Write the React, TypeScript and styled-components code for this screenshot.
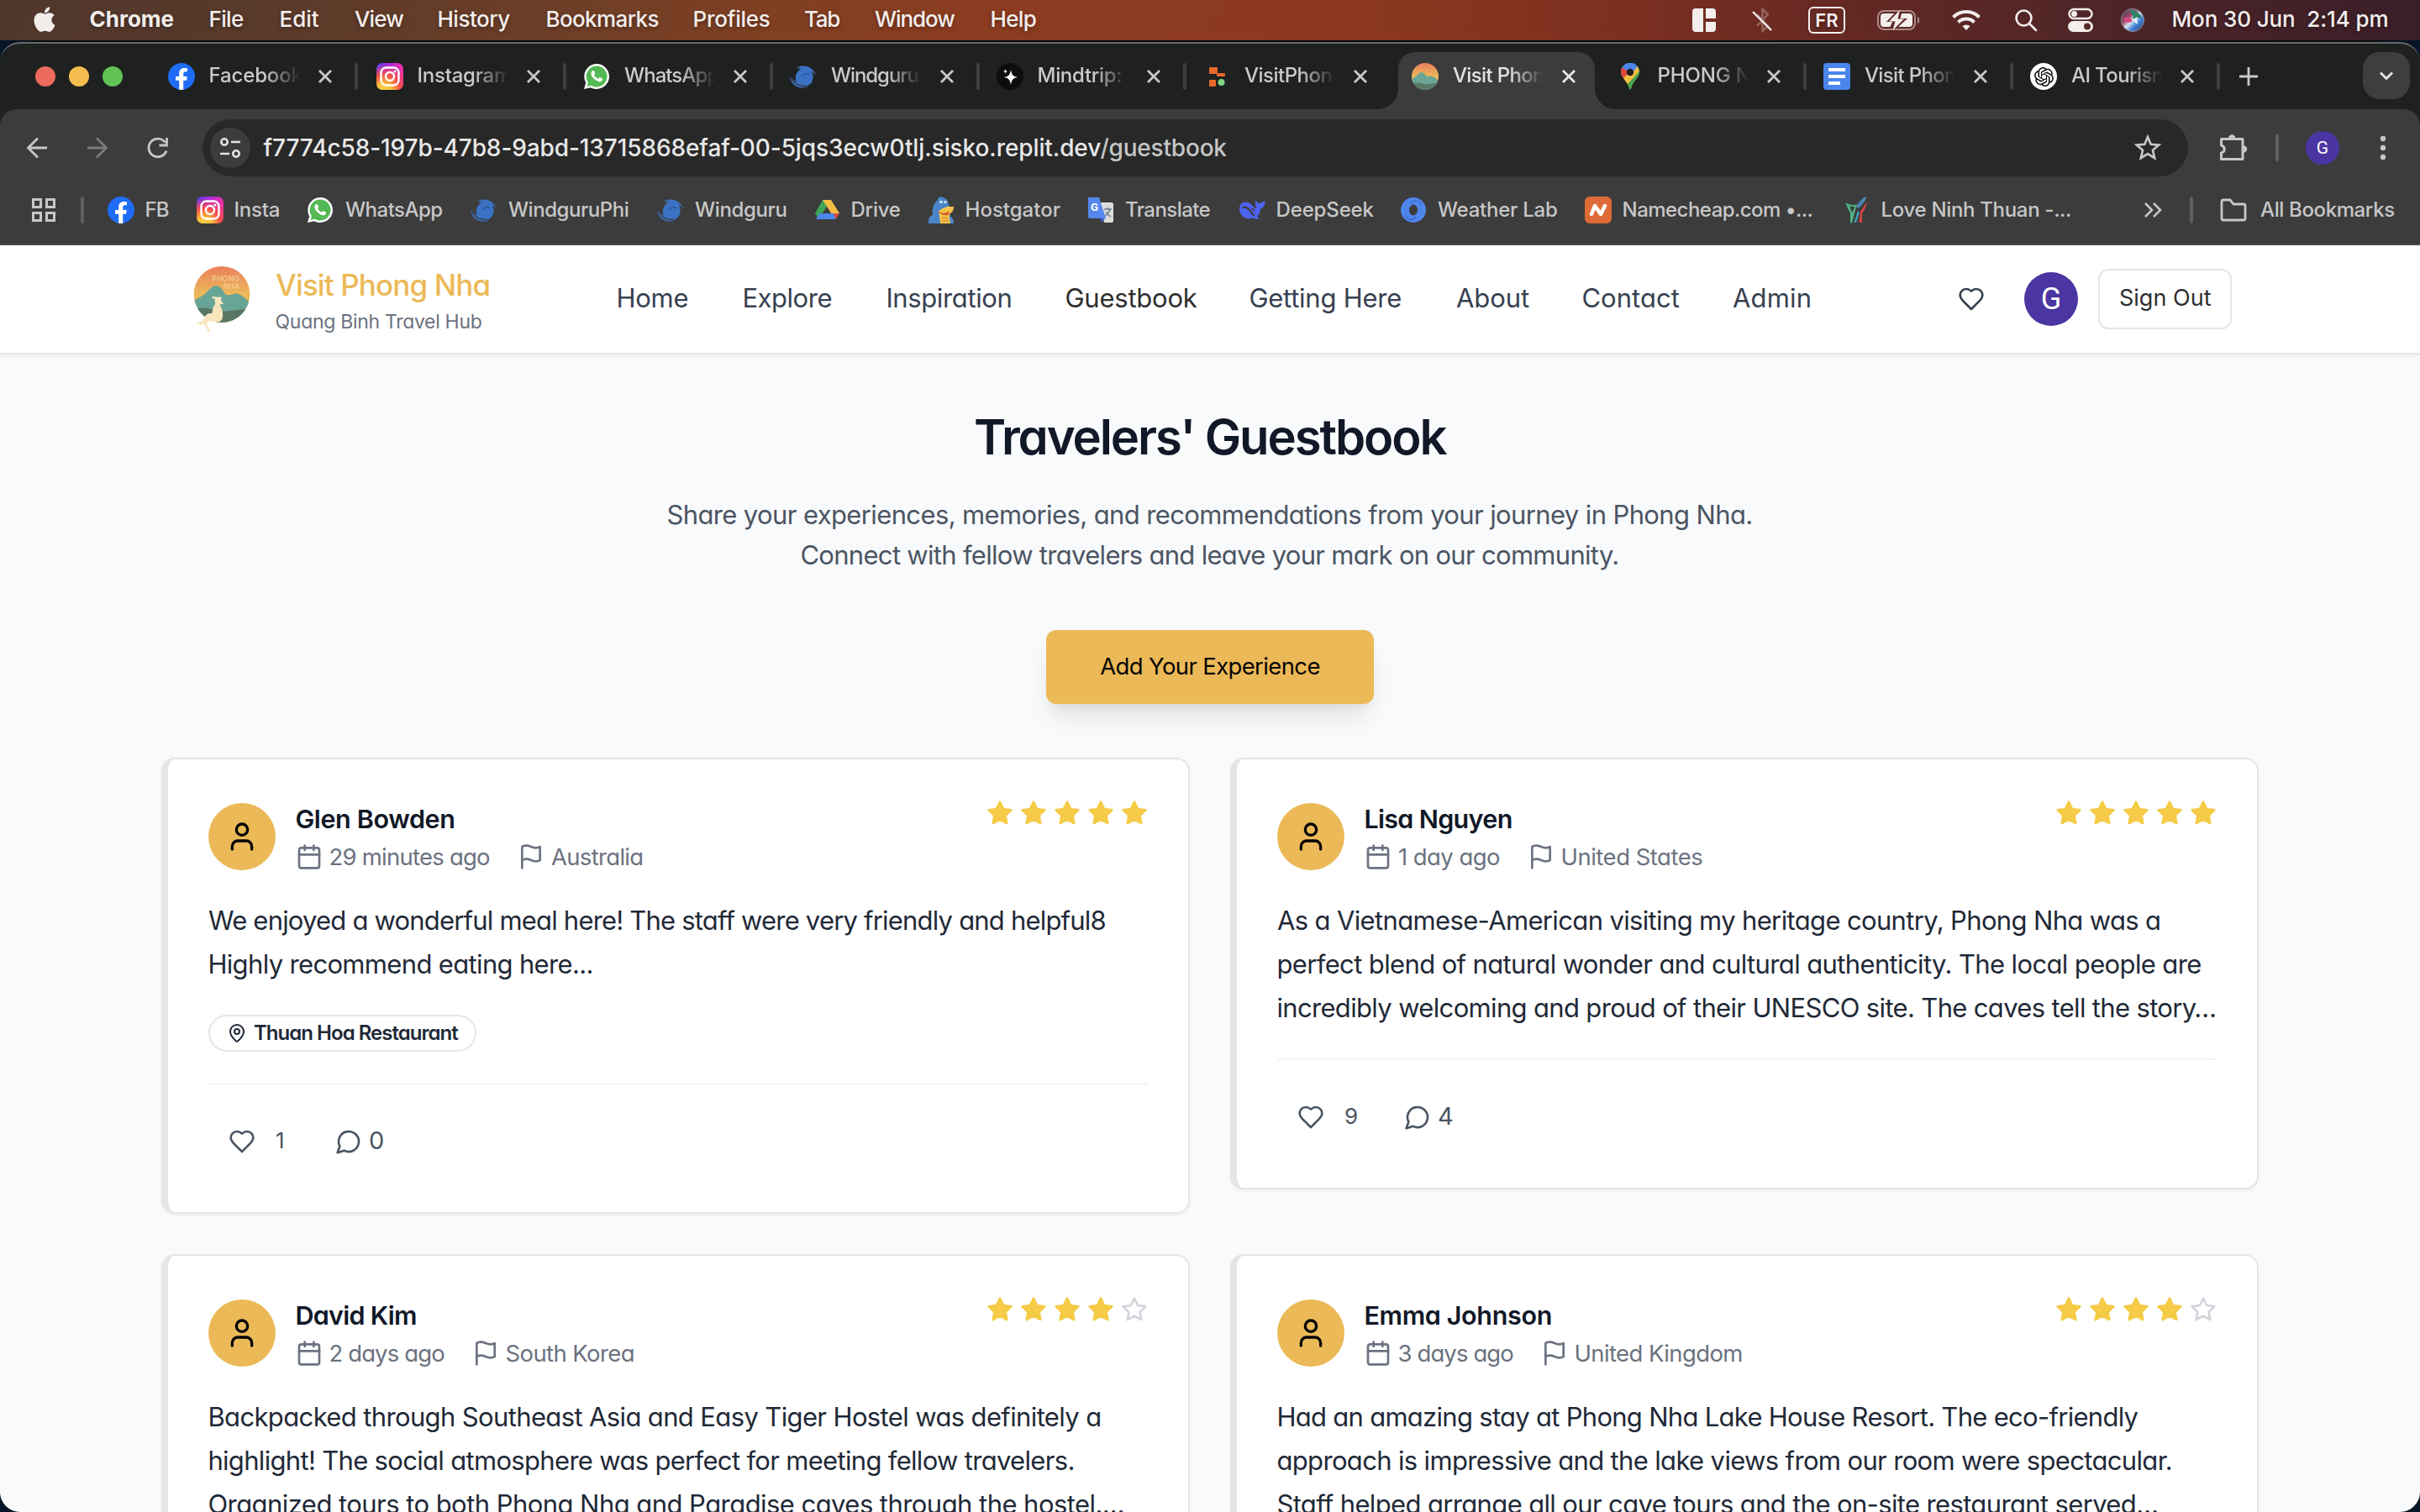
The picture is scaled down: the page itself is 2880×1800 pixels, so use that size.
import React, { useLayoutEffect, useRef, useState } from 'react';
import styled, { createGlobalStyle } from 'styled-components';
import { FaApple, FaFacebookF } from 'react-icons/fa';
import { SiOpenai } from 'react-icons/si';

const GlobalStyle = createGlobalStyle`
  * { box-sizing: border-box; }
  html, body { margin: 0; padding: 0; background: #060a10; }
  body {
    font-family: Inter, "Liberation Sans", sans-serif;
    -webkit-font-smoothing: antialiased;
    overflow: hidden;
  }
  svg { display: block; flex: none; }
`;

/* ---------- fitted text ---------- */

const FitBox = styled.span<{ $w: number }>`
  display: inline-block;
  flex: none;
  width: ${(p) => p.$w}px;
  white-space: pre;
`;

const FitInner = styled.span`
  display: inline-block;
`;

/* Tracks a single line of text so that its glyphs span the given width. */
function Fit({ w, children }: { w: number; children: string }) {
  const ref = useRef<HTMLSpanElement>(null);
  const [style, setStyle] = useState<React.CSSProperties>({});
  useLayoutEffect(() => {
    const el = ref.current;
    if (!el) return;
    const size = parseFloat(getComputedStyle(el).fontSize);
    const lead = /^[AVWTY1]/.test(children) ? 0 : 0.02;
    const natural = el.offsetWidth - (lead + 0.02) * size;
    const gaps = Math.max(children.length - 1, 1);
    setStyle({
      letterSpacing: children.length > 1 ? `${(w - natural) / gaps}px` : undefined,
      marginLeft: `${-lead * size}px`,
    });
  }, [w, children]);
  return (
    <FitBox $w={w}>
      <FitInner ref={ref} style={style}>{children}</FitInner>
    </FitBox>
  );
}

/* ---------- desktop and menu bar ---------- */

const Desktop = styled.div`
  width: 2880px;
  height: 1800px;
  display: flex;
  flex-direction: column;
  gap: 2px;
  overflow: hidden;
  background: linear-gradient(90deg, #07182b 0, #060a10 60px, #060a10 2820px, #07182b 100%);
`;

const MenuBar = styled.div`
  height: 48px;
  flex: none;
  display: flex;
  align-items: center;
  padding-left: 36px;
  color: #f3eeec;
  font-size: 26px;
  line-height: 46px;
  text-shadow: 0 2px 4px rgba(0, 0, 0, 0.35);
  background: linear-gradient(90deg, #50372c 0, #59392a 300px, #6c3e27 650px, #7f3f22 920px, #8b3c20 1150px, #8c381f 1600px, #7d3020 1920px, #642823 2200px, #4e2528 2500px, #3a1e28 2880px);
`;

const MenuSlot = styled.div<{ $w: number; $bold?: boolean }>`
  width: ${(p) => p.$w}px;
  flex: none;
  display: flex;
  align-items: center;
  padding-bottom: 2px;
  font-weight: ${(p) => (p.$bold ? 700 : 500)};
`;

const Status = styled.div<{ $w: number; $gap: number }>`
  width: ${(p) => p.$w}px;
  margin-left: ${(p) => p.$gap}px;
  flex: none;
  display: flex;
  align-items: center;
  justify-content: center;
`;

const LangBadge = styled.div`
  width: 44px;
  height: 32px;
  border: 2px solid #f3eeec;
  border-radius: 6px;
  display: flex;
  align-items: center;
  justify-content: center;
  font-size: 22px;
  font-weight: 600;
  line-height: 28px;
`;

const Clock = styled.div`
  margin-left: 33px;
  padding-bottom: 2px;
  font-weight: 500;
`;

/* ---------- browser window ---------- */

const Window = styled.div`
  flex: 1;
  min-height: 0;
  display: flex;
  flex-direction: column;
  border-top: 2px solid #676a69;
  border-radius: 24px;
  overflow: hidden;
  background: #1f2120;
`;

const TabStrip = styled.div`
  height: 78px;
  flex: none;
  display: flex;
  align-items: stretch;
  padding-right: 12px;
`;

const Lights = styled.div`
  width: 184px;
  padding-left: 42px;
  display: flex;
  align-items: center;
  gap: 16px;
`;

const Light = styled.i<{ $c: string }>`
  width: 24px;
  height: 24px;
  border-radius: 50%;
  background: ${(p) => p.$c};
`;

const TabCell = styled.div<{ $w: number }>`
  width: ${(p) => p.$w}px;
  flex: none;
  display: flex;
  align-items: center;
  padding-left: 16px;
  color: #c9cac9;
`;

const ActiveTab = styled.div`
  position: relative;
  width: 234px;
  margin: 10px 10px 0 2px;
  padding: 0 0 10px 16px;
  flex: none;
  display: flex;
  align-items: center;
  border-radius: 20px 20px 0 0;
  background: #3c3c3c;
  color: #e3e3e3;
  &::before, &::after {
    content: "";
    position: absolute;
    bottom: 0;
    width: 24px;
    height: 24px;
  }
  &::before {
    left: -24px;
    background: radial-gradient(circle at 0 0, transparent 23.5px, #3c3c3c 24px);
  }
  &::after {
    right: -24px;
    background: radial-gradient(circle at 100% 0, transparent 23.5px, #3c3c3c 24px);
  }
`;

const TabTitle = styled.div`
  width: 108px;
  margin-left: 17px;
  overflow: hidden;
  font-size: 24px;
  font-weight: 450;
  line-height: 36px;
  padding-bottom: 2px;
  mask-image: linear-gradient(90deg, #000 62%, transparent 100%);
`;

const TabClose = styled.div`
  width: 24px;
  margin-left: 18px;
  display: flex;
  justify-content: center;
`;

const TabRule = styled.i<{ $hidden?: boolean }>`
  width: 4px;
  height: 32px;
  border-radius: 2px;
  margin-left: 23px;
  background: ${(p) => (p.$hidden ? 'transparent' : '#3c3f3e')};
`;

const NewTab = styled.div`
  flex: 1;
  display: flex;
  align-items: center;
  padding-left: 19px;
`;

const TabMenu = styled.div`
  width: 56px;
  height: 56px;
  margin-top: 10px;
  border-radius: 20px;
  background: #3c3f3e;
  display: flex;
  align-items: center;
  justify-content: center;
`;

const Toolbar = styled.div`
  height: 162px;
  flex: none;
  display: flex;
  flex-direction: column;
  border-radius: 20px 20px 0 0;
  border-bottom: 2px solid #484848;
  background: #3c3c3c;
  color: #c7c7c7;
`;

const AddressRow = styled.div`
  height: 80px;
  padding-top: 12px;
  display: flex;
  align-items: center;
`;

const NavButtons = styled.div`
  width: 241px;
  display: flex;
  align-items: center;
  padding-left: 28px;
  gap: 40px;
`;

const UrlPill = styled.div`
  width: 2363px;
  height: 68px;
  border-radius: 34px;
  background: #282828;
  display: flex;
  align-items: center;
  padding: 0 28px 0 9px;
  font-size: 28px;
  font-weight: 450;
  line-height: 40px;
`;

const SiteButton = styled.div`
  width: 48px;
  height: 48px;
  border-radius: 50%;
  margin-right: 16px;
  background: #3c3c3c;
  display: flex;
  align-items: center;
  justify-content: center;
`;

const Domain = styled.div`color: #e8e8e8;`;
const Path = styled.div`flex: 1; color: #c4c7c5;`;

const ToolbarEnd = styled.div`
  flex: 1;
  display: flex;
  align-items: center;
  padding-left: 36px;
`;

const Rule = styled.i<{ $gap: number }>`
  width: 4px;
  height: 32px;
  border-radius: 2px;
  margin-left: ${(p) => p.$gap}px;
  background: #5f5f5f;
`;

const Avatar = styled.div<{ $size: number; $font: number }>`
  width: ${(p) => p.$size}px;
  height: ${(p) => p.$size}px;
  flex: none;
  border-radius: 50%;
  background: #4a35a2;
  color: #fff;
  font-family: Roboto, sans-serif;
  font-size: ${(p) => p.$font}px;
  display: flex;
  align-items: center;
  justify-content: center;
`;

const BookmarkRow = styled.div`
  height: 80px;
  display: flex;
  align-items: center;
  font-size: 24px;
  font-weight: 450;
  line-height: 36px;
`;

const AppsCell = styled.div`
  width: 128px;
  display: flex;
  align-items: center;
  padding-left: 38px;
`;

const Bookmark = styled.div<{ $w: number }>`
  width: ${(p) => p.$w}px;
  flex: none;
  display: flex;
  align-items: center;
`;

const BookmarkText = styled.div<{ $gap: number }>`
  margin-left: ${(p) => p.$gap}px;
`;

/* ---------- favicons ---------- */

const Disc = styled.div<{ $bg: string; $fg: string }>`
  width: 32px;
  height: 32px;
  flex: none;
  border-radius: 50%;
  background: ${(p) => p.$bg};
  color: ${(p) => p.$fg};
  display: flex;
  align-items: center;
  justify-content: center;
  overflow: hidden;
`;

const FbDisc = styled(Disc)`
  align-items: flex-end;
`;

const InstaTile = styled.div`
  width: 32px;
  height: 32px;
  flex: none;
  border-radius: 7px;
  background: radial-gradient(circle at 28% 105%, #ffd54a 0, #fdc13c 22%, #f5504a 48%, transparent 78%),
    linear-gradient(115deg, #4a3cf0 0, #b02be0 35%, #ea2fa8 70%);
`;

const Icon = ({ size = 32, box = 32, children }: { size?: number; box?: number; children: React.ReactNode }) => (
  <svg width={size} height={size} viewBox={`0 0 ${box} ${box}`} fill="none">{children}</svg>
);

const Facebook = () => <FbDisc $bg="#1f6cf6" $fg="#fff"><FaFacebookF size={26} /></FbDisc>;

const Instagram = () => (
  <InstaTile>
    <Icon>
      <rect x="5.5" y="5.5" width="21" height="21" rx="6" stroke="#fff" strokeWidth="2.4" />
      <circle cx="16" cy="16" r="5" stroke="#fff" strokeWidth="2.4" />
      <circle cx="22" cy="10" r="1.5" fill="#fff" />
    </Icon>
  </InstaTile>
);

const WhatsApp = () => (
  <Icon>
    <path d="M16 1a15 15 0 0 1 0 30c-2.600 0-5-.7-7.100-1.800L1 31l2.200-7.600A15 15 0 0 1 16 1z" fill="#fff" />
    <path d="M16 3.500a12.500 12.500 0 1 1-6.300 23.300L4.600 28l1.300-4.900A12.500 12.500 0 0 1 16 3.500z" fill="#54b955" />
    <path d="M11.500 9c.6-.2 1.300-.1 1.600.6l1.100 2.600c.2.500-.9 1.600-1.100 2 1 2.100 2.600 3.600 4.800 4.500.5-.3 1.400-1.800 1.900-1.700l2.900 1.400c.6.400.2 1.700-.1 2.300-.6 1-2.200 1.700-3.300 1.600-4.300-.6-9.300-5.300-9.900-9.200-.1-1.500.6-3.400 2.100-4.100z" fill="#fff" />
  </Icon>
);

const Windguru = () => (
  <Icon>
    <path d="M9 7c8-4.500 18-2 22 8-1.500-2-3-3.300-5-4 1.500 2.500 2 5.500 1.300 8.500C26 25.500 21 28.500 15.500 28 8.500 27.500 2.500 23 1 16.500c2 3 4.500 5 7 6C5.500 17 7 10.500 13 7.700 11.500 7.200 10.500 7 9 7z" fill="#3b72c4" />
    <path d="M12 5c7-2 14 1 17 8M2 19c3 6 10 9 17 8" stroke="#3c3c3c" strokeWidth="1.200" />
    <path d="M8 5.500C15 1.500 27 3.500 31 14 26 7 17 4.500 8 5.500zM0 17c3 7 11 13 22 11.500C13 32 2 28 0 17z" fill="#3b72c4" />
    <path d="M14 16c2-3.500 6-4 9-2.500" stroke="#2b559b" strokeWidth="1.400" />
  </Icon>
);

const Mindtrip = () => (
  <Disc $bg="#0d0d0d" $fg="#fff">
    <Icon>
      <path d="M17 8c1 6 2.500 8 8 9-5.500 1-7 3-8 9-1-6-2.500-8-8-9 5.500-1 7-3 8-9z" fill="#fff" />
      <path d="M10.500 7c.3 2 1 2.700 3 3-2 .3-2.700 1-3 3-.3-2-1-2.700-3-3 2-.3 2.700-1 3-3z" fill="#fff" />
    </Icon>
  </Disc>
);

const Replit = () => (
  <Icon>
    <rect x="7" y="5" width="10" height="8" rx="1" fill="#e7692c" />
    <rect x="16" y="12" width="10" height="4" rx="1" fill="#e7692c" />
    <rect x="7" y="20" width="8" height="8" rx="1" fill="#e7692c" />
    <circle cx="21.500" cy="23" r="4" fill="#7fd67f" />
  </Icon>
);

const PhongNha = () => (
  <Icon>
    <defs>
      <linearGradient id="favSky" x1="0" y1="0" x2="0" y2="1">
        <stop offset="0" stopColor="#ea7f5c" /><stop offset=".5" stopColor="#ecb85a" />
      </linearGradient>
      <clipPath id="favClip"><circle cx="16" cy="16" r="16" /></clipPath>
    </defs>
    <g clipPath="url(#favClip)">
      <rect width="32" height="32" fill="url(#favSky)" />
      <path d="M0 19C5 17 9 11 12 11c3 0 5 6 8 5 4-2 8 2 12 5v11H0z" fill="#69a597" />
      <path d="M0 25c8-4 14 1 20 0 5-1 8-1 12 0v7H0z" fill="#5a7965" />
    </g>
  </Icon>
);

const MapsPin = () => (
  <Icon>
    <defs>
      <clipPath id="pinClip"><path d="M16 0c6.200 0 11 4.800 11 10.800 0 7.200-7.500 9.700-10 19.700-.3 1.500-1.700 1.500-2 0C12.500 20.500 5 18 5 10.800 5 4.800 9.800 0 16 0z" /></clipPath>
    </defs>
    <g clipPath="url(#pinClip)">
      <rect width="32" height="32" fill="#4fa352" />
      <path d="M16 11 24 0H0v6z" fill="#4a86ec" />
      <path d="M4 4l12 7-9 10H0z" fill="#de4b3e" />
      <path d="M6 20 20 6l5-6 6 6-19 20z" fill="#f3bd42" />
      <path d="M32 4 11 28l8 4h13z" fill="#4fa352" />
      <path d="M9 0h12l4 4-6 7-11-6z" fill="#4a86ec" />
    </g>
    <circle cx="16" cy="11" r="4.200" fill="#1f2120" />
  </Icon>
);

const Docs = () => (
  <Icon>
    <rect width="32" height="32" rx="4" fill="#4a86ec" />
    <path d="M6 8h20M6 16h20M6 24h14" stroke="#fff" strokeWidth="4" />
  </Icon>
);

const OpenAi = () => <Disc $bg="#fff" $fg="#0c0c0c"><SiOpenai size={23} /></Disc>;

const Drive = () => (
  <Icon>
    <path d="M11 4h10L6.500 27 2 20z" fill="#3fa457" />
    <path d="M11 4h10l10 16H21z" fill="#f5bd42" />
    <path d="M7.500 20H31l-5 7H3z" fill="#4a86ec" />
    <path d="M24 20h7l-4.500 7z" fill="#dd4b3e" />
    <path d="M16 12l5 8H11z" fill="#3c3c3c" />
  </Icon>
);

const Hostgator = () => (
  <Icon>
    <path d="M12 4c.500-3 2-4.500 4-3.500 2 0 3 0 4 1.500 3 1 4.500 3 4.500 6l1.500 4 4 .5c1 3-1 6-4 7l1 4c2.500 1 4 4 4 8.500H1c-.5-5 1-9 5-10C5 15 7 8 12 4z" fill="#4a86c9" />
    <path d="M18 14l5-2h8c0 4-1.500 7-4.500 8l-1 4 1.500 8H15l-1-9-1-6z" fill="#f5c44a" />
    <path d="M12 16c3 4 8 5.500 14 1l-1.500 5C19 23 14 21 12 16z" fill="#d9562f" />
    <circle cx="16" cy="6.500" r="1.800" fill="#dfe9f3" /><circle cx="21" cy="6.500" r="1.600" fill="#dfe9f3" />
    <path d="M17 25l7 1M17 29l8 0" stroke="#e08a36" strokeWidth="1.400" />
  </Icon>
);

const Translate = () => (
  <Icon>
    <path d="M14 7h15c1 0 2 1 2 2v20c0 1-1 2-2 2H20z" fill="#dcdcdc" />
    <path d="M15 26h6l-4 5z" fill="#3457c0" />
    <path d="M2 1h12l8 25H3c-1 0-2-1-2-2V2c0-1 0-1 1-1z" fill="#5488ec" />
    <path d="M20 15h9M24.500 13v2M27 15c-1 4-3 6-6 8M22 18c1 2 3 4 6 6" stroke="#6b7a8a" strokeWidth="1.500" />
    <text x="4" y="17" fontSize="13" fontWeight="700" fill="#fff" fontFamily="Roboto, sans-serif">G</text>
  </Icon>
);

const DeepSeek = () => (
  <Icon>
    <path d="M20.500 4c.5 2 2 3.500 4.500 4.300C27 6.500 29 6 31.500 5.500c0 5-2 8-5.500 9-.3 4-1.500 7-4 9.500l2.500 2c-2.500 1.500-5 .8-7-.5C9 28.500 1 23 1 14.500 1 9 5 6 9.500 6.500c2 .2 3 1 4.500 2 2 1.500 4 3 5.500 5.500l2-1c-1.500-2.500-2.500-5-1-9z" fill="#4d63f0" />
    <path d="M4.500 13c5-1.500 8 2 10 5 1.500 2.200 3 3.500 4.500 4.500" stroke="#3c3c3c" strokeWidth="2.200" />
    <path d="M15 14.500c2 0 3.500 1 4 3" stroke="#3c3c3c" strokeWidth="1.600" />
  </Icon>
);

const WeatherLab = () => (
  <Icon>
    <circle cx="16" cy="16" r="15" fill="#4f86ec" />
    <ellipse cx="16" cy="16" rx="5" ry="6.500" fill="#3c3c3c" />
    <path d="M13 8c3-5 10-4 13 2M19 24c-3 5-10 4-13-2" stroke="#3c6fd0" strokeWidth="1.500" />
  </Icon>
);

const Namecheap = () => (
  <Icon>
    <rect width="32" height="32" rx="6" fill="#de6a37" />
    <path d="M8 21 12 11l7 10 5-10" stroke="#fff" strokeWidth="4.500" strokeLinecap="round" strokeLinejoin="round" />
  </Icon>
);

const NinhThuan = () => (
  <Icon>
    <path d="M2 7.500c5 2 10 3 14 2L13 20l-3 11.500H8V20z" fill="#4fb083" />
    <path d="M7.500 11.500l6 .8-3.500 7z" fill="#3c3c3c" />
    <path d="M27 0c0 5-4.500 9-9.500 14l-2.500-2c2-4 6-9.500 12-12z" fill="#4a86b0" />
    <path d="M28 6c-1 6-3 10-6 14v11h-3.500l1.500-13z" fill="#d8453f" />
    <path d="M17 17l2 2-4 12h-2.500z" fill="#45a0c0" />
  </Icon>
);

const CloseGlyph = ({ c = '#c9cac9' }: { c?: string }) => (
  <Icon size={18} box={18}><path d="M2 2l14 14M16 2 2 16" stroke={c} strokeWidth="2.800" /></Icon>
);

/* ---------- site ---------- */

const Page = styled.div`
  flex: 1;
  min-height: 0;
  overflow: hidden;
  background: #f9fafc;
  font-feature-settings: "cv11" 1;
`;

const SiteHeader = styled.header`
  height: 130px;
  display: flex;
  align-items: center;
  padding-left: 228px;
  background: #fff;
  border-bottom: 2px solid #e4e5e8;
  box-shadow: 0 2px 4px rgba(0, 0, 0, 0.06);
`;

const Brand = styled.div`
  width: 506px;
  display: flex;
  align-items: center;
`;

const BrandText = styled.div`
  margin: 7px 0 0 28px;
  display: flex;
  flex-direction: column;
`;

const BrandName = styled.div`
  font-size: 35px;
  font-weight: 500;
  line-height: 46px;
  color: #ecb958;
`;

const BrandTag = styled.div`
  font-size: 23px;
  line-height: 42px;
  color: #6b7280;
`;

const Nav = styled.nav`
  width: 1596px;
  display: flex;
  padding-bottom: 3px;
  font-size: 31px;
  font-weight: 380;
  line-height: 44px;
`;

const NavLink = styled.a<{ $w: number; $active?: boolean }>`
  width: ${(p) => p.$w}px;
  flex: none;
  color: ${(p) => (p.$active ? '#2f2f2f' : '#374151')};
`;

const Account = styled.div`
  display: flex;
  align-items: center;
  color: #374151;
`;

const AccountAvatar = styled.div`
  margin: 0 24px 0 47px;
`;

const SignOut = styled.button`
  width: 159px;
  height: 72px;
  padding: 0 0 2px;
  border: 2px solid #e5e5e5;
  border-radius: 12px;
  background: #fff;
  color: #2f2f2f;
  font: 400 27px/40px Inter, sans-serif;
  font-feature-settings: "cv11" 1;
`;

const Hero = styled.section`
  display: flex;
  flex-direction: column;
  align-items: center;
  padding-top: 58px;
`;

const Title = styled.h1`
  margin: 0;
  font-size: 58px;
  font-weight: 600;
  line-height: 80px;
  color: #111827;
`;

const Lead = styled.p`
  margin: 29px 0 0;
  display: flex;
  flex-direction: column;
  align-items: center;
  font-size: 31px;
  font-weight: 380;
  line-height: 48px;
  color: #4b5563;
`;

const AddButton = styled.button`
  width: 390px;
  height: 88px;
  margin-top: 65px;
  padding: 0 0 2px;
  border: 0;
  border-radius: 12px;
  background: #ebb957;
  color: #050505;
  font: 400 27.500px/40px Inter, sans-serif;
  font-feature-settings: "cv11" 1;
  box-shadow: 0 20px 30px -6px rgba(0, 0, 0, 0.1), 0 8px 12px -8px rgba(0, 0, 0, 0.1);
`;

const Grid = styled.main`
  display: grid;
  grid-template-columns: 1224px 1224px;
  gap: 48px;
  align-items: start;
  padding: 64px 0 0 192px;
`;

const Card = styled.article`
  padding: 48px;
  border: 2px solid #e7e5e4;
  border-left-width: 8px;
  border-radius: 16px;
  background: #fff;
  box-shadow: 0 2px 4px rgba(0, 0, 0, 0.05);
`;

const CardHead = styled.div`
  display: flex;
  justify-content: space-between;
  align-items: flex-start;
`;

const Author = styled.div`
  display: flex;
  align-items: center;
  gap: 24px;
`;

const AuthorDisc = styled.div`
  width: 80px;
  height: 80px;
  border-radius: 50%;
  background: #ebb957;
  color: #050505;
  display: flex;
  align-items: center;
  justify-content: center;
`;

const AuthorName = styled.div`
  font-size: 30.500px;
  font-weight: 600;
  line-height: 46px;
  padding-bottom: 2px;
  color: #111827;
`;

const Meta = styled.div`
  height: 40px;
  display: flex;
  align-items: center;
  font-size: 27.500px;
  font-weight: 380;
  line-height: 40px;
  color: #6b7280;
`;

const MetaText = styled.div<{ $right?: number }>`
  margin: 0 ${(p) => p.$right ?? 0}px 0 8px;
`;

const Stars = styled.div`
  display: flex;
  gap: 8px;
`;

const Body = styled.div`
  margin-top: 30px;
  display: flex;
  flex-direction: column;
  font-size: 31px;
  font-weight: 380;
  line-height: 52px;
  color: #1f2937;
`;

const Tags = styled.div`
  display: flex;
  height: 47px;
  margin-top: 34px;
  align-items: flex-start;
`;

const Tag = styled.div`
  height: 44px;
  width: 319px;
  display: flex;
  align-items: center;
  gap: 8px;
  padding-left: 20px;
  border: 2px solid #e5e5e5;
  border-radius: 22px;
  font-size: 24px;
  font-weight: 600;
  line-height: 38px;
  color: #1f2937;
`;

const CardFoot = styled.div`
  margin-top: 34px;
  height: 106px;
  padding: 32px 0 0 24px;
  border-top: 2px solid #f3f4f6;
  display: flex;
  align-items: center;
  color: #4b5563;
`;

const LikeCount = styled.div`
  width: 71px;
  margin-left: 24px;
  padding-bottom: 2px;
  font-size: 26px;
  font-weight: 380;
  line-height: 40px;
`;

const CommentCount = styled.div`
  margin-left: 8px;
  padding-bottom: 2px;
  font-size: 29px;
  font-weight: 380;
  line-height: 40px;
`;

/* 24-unit line icons */
const Line = ({ size, children, fill = 'none', color = 'currentColor', w = 2 }: {
  size: number; children: React.ReactNode; fill?: string; color?: string; w?: number;
}) => (
  <svg width={size} height={size} viewBox="0 0 24 24" fill={fill} stroke={color} strokeWidth={w} strokeLinecap="round" strokeLinejoin="round">
    {children}
  </svg>
);

const HeartIcon = () => (
  <Line size={32}><path d="M19 14c1.490-1.460 3-3.210 3-5.500A5.500 5.500 0 0 0 16.500 3c-1.760 0-3 .5-4.500 2-1.500-1.500-2.740-2-4.500-2A5.500 5.500 0 0 0 2 8.500c0 2.300 1.500 4.050 3 5.500l7 7Z" /></Line>
);
const UserIcon = () => (
  <Line size={40}><path d="M19 21v-2a4 4 0 0 0-4-4H9a4 4 0 0 0-4 4v2" /><circle cx="12" cy="7" r="4" /></Line>
);
const CalendarIcon = () => (
  <Line size={32}><path d="M8 2v4M16 2v4" /><rect x="3" y="4" width="18" height="18" rx="2" /><path d="M3 10h18" /></Line>
);
const FlagIcon = () => (
  <Line size={32}><path d="M4 15s1-1 4-1 5 2 8 2 4-1 4-1V3s-1 1-4 1-5-2-8-2-4 1-4 1z" /><path d="M4 22v-7" /></Line>
);
const PinIcon = () => (
  <Line size={24}><path d="M20 10c0 4.993-5.539 10.193-7.399 11.799a1 1 0 0 1-1.202 0C9.539 20.193 4 14.993 4 10a8 8 0 0 1 16 0" /><circle cx="12" cy="10" r="3" /></Line>
);
const CommentIcon = () => (
  <Line size={32}><path d="M7.900 20A9 9 0 1 0 4 16.100L2 22Z" /></Line>
);
const StarIcon = ({ on }: { on: boolean }) => (
  <Line size={32} fill={on ? '#f5cb47' : 'none'} color={on ? '#f5cb47' : '#d1d5db'}>
    <path d="M12 2l3.090 6.260L22 9.270l-5 4.870 1.180 6.880L12 17.770l-6.180 3.250L7 14.140 2 9.270l6.910-1.010L12 2z" />
  </Line>
);

const Logo = () => (
  <svg width="72" height="84" viewBox="24 20 216 252" fill="none">
    <defs>
      <linearGradient id="sky" x1="0" y1="0" x2="0" y2="1">
        <stop offset="0" stopColor="#ea7f5c" /><stop offset=".48" stopColor="#ecb85a" />
      </linearGradient>
      <clipPath id="disc"><circle cx="132" cy="129" r="100" /></clipPath>
    </defs>
    <g clipPath="url(#disc)">
      <rect x="30" y="28" width="204" height="204" fill="url(#sky)" />
      <path d="M30 152c24-10 42-22 56-39 12-15 28-20 42-7 10 8 15 26 27 26 14 0 24-12 44 0 14 8 22 18 36 26v80H30z" fill="#69a597" />
      <path d="M30 184c24-8 48-10 76 2 40 12 84-8 130-2v60H30z" fill="#587663" />
    </g>
    <text x="97" y="84" fontSize="25" textLength="97" fill="#f8d9a4" fontFamily="Inter, sans-serif">PHONG</text>
    <text x="137" y="111" fontSize="25" textLength="58" fill="#f8d9a4" fontFamily="Inter, sans-serif">NHA</text>
    <path d="M99 136c12 3 22 2 33 3l-4 10 10 14-9 1-5 4c9 10 13 28 11 42-2 13-10 19-22 18-13-1-20-4-27-5l-9 14 9 14c4 4 3 8 4 12h-12l4-6-13-20-4-3-6 5-9-4h-8l5-6 13-3 15-22c5-7 14-7 23-7 0-12 2-22 10-32l-1-20-11-2z" fill="#fbe5bd" />
  </svg>
);

/* ---------- data ---------- */

const menus: [string, number, number][] = [
  ['File', 84, 41], ['Edit', 89, 46], ['View', 99, 58], ['History', 129, 86],
  ['Bookmarks', 175, 134], ['Profiles', 132, 91], ['Tab', 84, 43], ['Window', 138, 95], ['Help', 80, 54],
];

type TabData = [string, number, number, () => React.ReactElement];

const tabsBefore: TabData[] = [
  ['Facebook', 248, 110, Facebook], ['Instagram', 246, 112, Instagram], ['WhatsApp', 246, 113, WhatsApp],
  ['Windguru', 246, 104, Windguru], ['Mindtrip: A', 246, 123, Mindtrip], ['VisitPhong', 246, 119, Replit],
];
const tabsAfter: TabData[] = [
  ['PHONG N', 246, 110, MapsPin], ['Visit Phong', 246, 123, Docs], ['AI Tourism', 246, 117, OpenAi],
];

const bookmarks: [string, number, number, number, () => React.ReactElement][] = [
  ['FB', 106, 13, 28, Facebook], ['Insta', 131, 13, 54, Instagram], ['WhatsApp', 195, 14, 116, WhatsApp],
  ['WindguruPhi', 222, 13, 143, Windguru], ['Windguru', 186, 13, 109, Windguru], ['Drive', 136, 13, 58, Drive],
  ['Hostgator', 190, 13, 112, Hostgator], ['Translate', 180, 13, 101, Translate], ['DeepSeek', 192, 13, 115, DeepSeek],
  ['Weather Lab', 220, 13, 142, WeatherLab], ['Namecheap.com •...', 308, 13, 226, Namecheap], ['Love Ninh Thuan -...', 356, 13, 226, NinhThuan],
];

const links: [string, number, number][] = [
  ['Home', 150, 85], ['Explore', 171, 106], ['Inspiration', 213, 149], ['Guestbook', 219, 156],
  ['Getting Here', 246, 181], ['About', 150, 86], ['Contact', 179, 115], ['Admin', 100, 93],
];

interface Entry {
  name: [string, number];
  when: [string, number];
  country: [string, number];
  rating: number;
  lines: [string, number][];
  tag?: [string, number];
  likes?: string;
  comments?: string;
}

const entries: Entry[] = [
  {
    name: ['Glen Bowden', 189], when: ['29 minutes ago', 191], country: ['Australia', 110], rating: 5,
    lines: [
      ['We enjoyed a wonderful meal here! The staff were very friendly and helpful8', 1068],
      ['Highly recommend eating here...', 458],
    ],
    tag: ['Thuan Hoa Restaurant', 243], likes: '1', comments: '0',
  },
  {
    name: ['Lisa Nguyen', 176], when: ['1 day ago', 121], country: ['United States', 168], rating: 5,
    lines: [
      ['As a Vietnamese-American visiting my heritage country, Phong Nha was a', 1051],
      ['perfect blend of natural wonder and cultural authenticity. The local people are', 1100],
      ['incredibly welcoming and proud of their UNESCO site. The caves tell the story…', 1117],
    ],
    likes: '9', comments: '4',
  },
  {
    name: ['David Kim', 144], when: ['2 days ago', 137], country: ['South Korea', 153], rating: 4,
    lines: [
      ['Backpacked through Southeast Asia and Easy Tiger Hostel was definitely a', 1063],
      ['highlight! The social atmosphere was perfect for meeting fellow travelers.', 1031],
      ['Organized tours to both Phong Nha and Paradise caves through the hostel.…', 1090],
    ],
  },
  {
    name: ['Emma Johnson', 223], when: ['3 days ago', 137], country: ['United Kingdom', 200], rating: 4,
    lines: [
      ['Had an amazing stay at Phong Nha Lake House Resort. The eco-friendly', 1024],
      ['approach is impressive and the lake views from our room were spectacular.', 1065],
      ['Staff helped arrange all our cave tours and the on-site restaurant served…', 1048],
    ],
  },
];

/* ---------- parts ---------- */

const Tab = ({ tab: [title, cell, w, Fav], last }: { tab: TabData; last?: boolean }) => (
  <TabCell $w={cell}>
    <Fav />
    <TabTitle><Fit w={w}>{title}</Fit></TabTitle>
    <TabClose><CloseGlyph /></TabClose>
    <TabRule $hidden={last} />
  </TabCell>
);

const EntryCard = ({ e }: { e: Entry }) => (
  <Card>
    <CardHead>
      <Author>
        <AuthorDisc><UserIcon /></AuthorDisc>
        <div>
          <AuthorName><Fit w={e.name[1]}>{e.name[0]}</Fit></AuthorName>
          <Meta>
            <CalendarIcon />
            <MetaText $right={33}><Fit w={e.when[1]}>{e.when[0]}</Fit></MetaText>
            <FlagIcon />
            <MetaText><Fit w={e.country[1]}>{e.country[0]}</Fit></MetaText>
          </Meta>
        </div>
      </Author>
      <Stars>{[1, 2, 3, 4, 5].map((n) => <StarIcon key={n} on={n <= e.rating} />)}</Stars>
    </CardHead>
    <Body>{e.lines.map(([t, w]) => <Fit key={t} w={w}>{t}</Fit>)}</Body>
    {e.tag && <Tags><Tag><PinIcon /><Fit w={e.tag[1]}>{e.tag[0]}</Fit></Tag></Tags>}
    {e.likes && (
      <CardFoot>
        <HeartIcon />
        <LikeCount>{e.likes}</LikeCount>
        <CommentIcon />
        <CommentCount>{e.comments}</CommentCount>
      </CardFoot>
    )}
  </Card>
);

const MenuExtras = () => (
  <>
    <Status $w={28} $gap={755}>
      <svg width="28" height="28" viewBox="0 0 28 28" fill="#f3eeec">
        <path d="M4 0h9v28H4a4 4 0 0 1-4-4V4a4 4 0 0 1 4-4zM16 0h8a4 4 0 0 1 4 4v8H16zM16 16h12v8a4 4 0 0 1-4 4h-8z" />
      </svg>
    </Status>
    <Status $w={28} $gap={42}>
      <svg width="28" height="30" viewBox="0 0 28 30" fill="none">
        <path d="M7 8l13 14-6.500 6V2L20 8 7 22" stroke="#f3eeec" strokeOpacity=".3" strokeWidth="2.400" />
        <path d="M2 5l22 22" stroke="#f3eeec" strokeWidth="2.400" />
      </svg>
    </Status>
    <Status $w={44} $gap={40}><LangBadge>FR</LangBadge></Status>
    <Status $w={52} $gap={38}>
      <svg width="52" height="26" viewBox="0 0 52 26" fill="none">
        <rect x="1" y="2" width="44" height="22" rx="7" stroke="#f3eeec" strokeOpacity=".5" strokeWidth="2" />
        <path d="M48 9c3 1 3 7 0 8z" fill="#f3eeec" fillOpacity=".5" />
        <path d="M8 5h12.500L11 15h7l-2.500 6H8a4 4 0 0 1-4-4V9a4 4 0 0 1 4-4zM29 5h9a4 4 0 0 1 4 4v8a4 4 0 0 1-4 4H25l11-10h-8.500z" fill="#f3eeec" />
        <path d="M27 1 14 14.500h7.500L18.500 25 32 11.500h-7.500z" fill="#f3eeec" />
      </svg>
    </Status>
    <Status $w={36} $gap={36}>
      <svg width="36" height="26" viewBox="0 0 36 26" fill="none" stroke="#f3eeec" strokeWidth="4">
        <path d="M2.500 9.500a22 22 0 0 1 31 0M8.500 15.500a13.500 13.500 0 0 1 19 0" />
        <path d="M18 25l-4.500-4.700a6.500 6.500 0 0 1 9 0z" fill="#f3eeec" stroke="none" />
      </svg>
    </Status>
    <Status $w={28} $gap={39}>
      <svg width="28" height="28" viewBox="0 0 28 28" fill="none" stroke="#f3eeec" strokeWidth="2.600" strokeLinecap="round">
        <circle cx="11.500" cy="11.500" r="9" /><path d="M18.500 18.500 26 26" />
      </svg>
    </Status>
    <Status $w={30} $gap={36}>
      <svg width="30" height="30" viewBox="0 0 30 30" fill="none">
        <rect x="1.500" y="2" width="27" height="11" rx="5.500" stroke="#f3eeec" strokeWidth="2.400" />
        <circle cx="7.500" cy="7.500" r="3.500" fill="#f3eeec" />
        <rect x="0" y="16" width="30" height="13" rx="6.500" fill="#f3eeec" />
        <circle cx="23" cy="22.500" r="4" fill="#5a2a28" />
      </svg>
    </Status>
    <Status $w={28} $gap={33}>
      <svg width="28" height="28" viewBox="0 0 28 28">
        <defs>
          <linearGradient id="siri" x1="0" y1="0" x2="1" y2="1">
            <stop offset="0" stopColor="#2c3f52" /><stop offset=".35" stopColor="#a0486a" />
            <stop offset=".5" stopColor="#dbe8f4" /><stop offset=".68" stopColor="#3f7fd8" /><stop offset="1" stopColor="#2a3a66" />
          </linearGradient>
        </defs>
        <circle cx="14" cy="14" r="13.500" fill="url(#siri)" stroke="#8d9099" strokeWidth="1" />
        <path d="M10 2c7-1 14 4 15 11-3-3-7-2-10 1 0-5-2-8-5-12z" fill="#2f8468" />
        <path d="M3 12c4-3 8-1 11 3-4 3-8 3-11-3z" fill="#d64a80" />
        <path d="M14 14l5-4 1 9z" fill="#e6f2fb" />
      </svg>
    </Status>
    <Clock><Fit w={257}>{'Mon 30 Jun  2:14 pm'}</Fit></Clock>
  </>
);

export default function App() {
  return (
    <>
      <GlobalStyle />
      <Desktop>
        <MenuBar>
          <MenuSlot $w={71}><FaApple size={34} /></MenuSlot>
          <MenuSlot $w={142} $bold><Fit w={100}>Chrome</Fit></MenuSlot>
          {menus.map(([t, slot, w]) => <MenuSlot key={t} $w={slot}><Fit w={w}>{t}</Fit></MenuSlot>)}
          <MenuExtras />
        </MenuBar>
        <Window>
          <TabStrip>
            <Lights><Light $c="#ed6a5e" /><Light $c="#f5bd4f" /><Light $c="#61c454" /></Lights>
            {tabsBefore.map((t, i) => <Tab key={t[0]} tab={t} last={i === 5} />)}
            <ActiveTab>
              <PhongNha />
              <TabTitle><Fit w={123}>Visit Phong</Fit></TabTitle>
              <TabClose><CloseGlyph c="#e8e8e8" /></TabClose>
            </ActiveTab>
            {tabsAfter.map((t) => <Tab key={t[0]} tab={t} />)}
            <NewTab>
              <Icon size={22} box={22}><path d="M11 0v22M0 11h22" stroke="#c9cac9" strokeWidth="2.800" /></Icon>
            </NewTab>
            <TabMenu>
              <Icon size={20} box={20}><path d="M3 6.500l7 7 7-7" stroke="#e3e3e3" strokeWidth="3" /></Icon>
            </TabMenu>
          </TabStrip>
          <Toolbar>
            <AddressRow>
              <NavButtons>
                <Icon><path d="M28 16H6M17 4.500 5.500 16 17 27.500" stroke="#c7c7c7" strokeWidth="2.800" /></Icon>
                <Icon><path d="M4 16h22M15 4.500 26.500 16 15 27.500" stroke="#7c7c7c" strokeWidth="2.800" /></Icon>
                <Icon>
                  <path d="M26 19.500A10.800 10.800 0 1 1 24.500 9.500" stroke="#c7c7c7" strokeWidth="2.800" />
                  <path d="M26.500 4v9h-9" stroke="#c7c7c7" strokeWidth="2.800" />
                </Icon>
              </NavButtons>
              <UrlPill>
                <SiteButton>
                  <Icon size={26} box={26}>
                    <g stroke="#e3e3e3" strokeWidth="2.600">
                      <circle cx="6" cy="6" r="3.700" /><path d="M14 6h11" />
                      <circle cx="20" cy="20" r="3.700" /><path d="M1 20h11" />
                    </g>
                  </Icon>
                </SiteButton>
                <Domain><Fit w={996}>f7774c58-197b-47b8-9abd-13715868efaf-00-5jqs3ecw0tlj.sisko.replit.dev</Fit></Domain>
                <Path><Fit w={149}>/guestbook</Fit></Path>
                <Icon size={40} box={24}>
                  <path d="M12 4.200l2.200 5.300 5.700.5-4.300 3.700 1.300 5.600L12 16.300l-4.900 3 1.300-5.600L4.100 10l5.700-.5z" stroke="#c7c7c7" strokeWidth="1.600" />
                </Icon>
              </UrlPill>
              <ToolbarEnd>
                <Icon size={36} box={36}>
                  <path d="M3.500 7.500H29v24H3.500v-7.500c5-1.500 5-7.500 0-9z" stroke="#c7c7c7" strokeWidth="3" strokeLinejoin="round" />
                  <path d="M12 6.500a4.200 4.200 0 0 1 8.400 0zM30 15.300a4.200 4.200 0 0 1 0 8.400z" fill="#c7c7c7" />
                </Icon>
                <Rule $gap={32} />
                <Status $w={40} $gap={32}><Avatar $size={40} $font={21}>G</Avatar></Status>
                <Status $w={8} $gap={48}>
                  <svg width="8" height="30" viewBox="0 0 8 30" fill="#c7c7c7">
                    <circle cx="4" cy="4" r="3.200" /><circle cx="4" cy="15" r="3.200" /><circle cx="4" cy="26" r="3.200" />
                  </svg>
                </Status>
              </ToolbarEnd>
            </AddressRow>
            <BookmarkRow>
              <AppsCell>
                <Icon size={28} box={28}>
                  <g stroke="#c7c7c7" strokeWidth="3">
                    <rect x="1.500" y="1.500" width="9" height="9" /><rect x="17.500" y="1.500" width="9" height="9" />
                    <rect x="1.500" y="17.500" width="9" height="9" /><rect x="17.500" y="17.500" width="9" height="9" />
                  </g>
                </Icon>
                <Rule $gap={30} />
              </AppsCell>
              {bookmarks.map(([t, slot, gap, w, Fav]) => (
                <Bookmark key={t} $w={slot}><Fav /><BookmarkText $gap={gap}><Fit w={w}>{t}</Fit></BookmarkText></Bookmark>
              ))}
              <Icon size={24} box={24}><path d="M3 4l8 8-8 8M13 4l8 8-8 8" stroke="#c7c7c7" strokeWidth="2.600" /></Icon>
              <Rule $gap={32} />
              <Status $w={32} $gap={32}>
                <Icon><path d="M2 26V6a2 2 0 0 1 2-2h8l4 5h12a2 2 0 0 1 2 2v15a2 2 0 0 1-2 2H4a2 2 0 0 1-2-2z" stroke="#c7c7c7" strokeWidth="2.800" /></Icon>
              </Status>
              <BookmarkText $gap={16}><Fit w={160}>All Bookmarks</Fit></BookmarkText>
            </BookmarkRow>
          </Toolbar>
          <Page>
            <SiteHeader>
              <Brand>
                <Logo />
                <BrandText>
                  <BrandName><Fit w={255}>Visit Phong Nha</Fit></BrandName>
                  <BrandTag><Fit w={245}>Quang Binh Travel Hub</Fit></BrandTag>
                </BrandText>
              </Brand>
              <Nav>
                {links.map(([t, slot, w]) => <NavLink key={t} $w={slot} $active={t === 'Guestbook'}><Fit w={w}>{t}</Fit></NavLink>)}
              </Nav>
              <Account>
                <HeartIcon />
                <AccountAvatar><Avatar $size={64} $font={36}>G</Avatar></AccountAvatar>
                <SignOut><Fit w={108}>Sign Out</Fit></SignOut>
              </Account>
            </SiteHeader>
            <Hero>
              <Title><Fit w={562}>Travelers' Guestbook</Fit></Title>
              <Lead>
                <Fit w={1292}>Share your experiences, memories, and recommendations from your journey in Phong Nha.</Fit>
                <Fit w={974}>Connect with fellow travelers and leave your mark on our community.</Fit>
              </Lead>
              <AddButton><Fit w={262}>Add Your Experience</Fit></AddButton>
            </Hero>
            <Grid>{entries.map((e) => <EntryCard key={e.name[0]} e={e} />)}</Grid>
          </Page>
        </Window>
      </Desktop>
    </>
  );
}
